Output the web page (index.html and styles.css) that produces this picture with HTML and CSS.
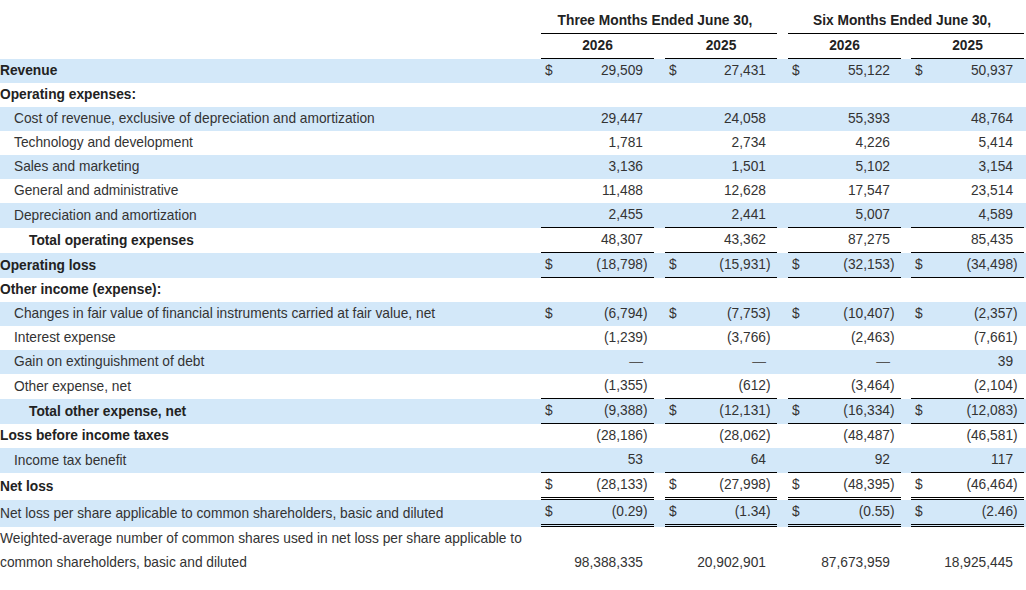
FILE: index.html
```html
<html>
  <head>
    <meta charset="utf-8">
    <link rel="stylesheet" href="styles.css">
  </head>
  <body>
    <table class="fin">
      <colgroup>
        <col class="w-label">
        <col class="w113"><col class="w11"><col class="w112"><col class="w11">
        <col class="w113"><col class="w10"><col class="w113"><col class="w2">
      </colgroup>
      <thead>
        <tr class="head1">
          <th></th>
          <th colspan="3" class="period b1">Three Months Ended June 30,</th>
          <th></th>
          <th colspan="3" class="period b1">Six Months Ended June 30,</th>
          <th></th>
        </tr>
        <tr class="head2">
          <th></th>
          <th class="year b1">2026</th><th></th>
          <th class="year b1">2025</th><th></th>
          <th class="year b1">2026</th><th></th>
          <th class="year b1">2025</th><th></th>
        </tr>
      </thead>
      <tbody>
        <tr class="band">
          <td class="label bold">Revenue</td>
          <td class="v"><span class="cur">$</span>29,509</td><td></td>
          <td class="v"><span class="cur">$</span>27,431</td><td></td>
          <td class="v"><span class="cur">$</span>55,122</td><td></td>
          <td class="v"><span class="cur">$</span>50,937</td><td></td>
        </tr>
        <tr>
          <td class="label bold">Operating expenses:</td>
          <td class="v"></td><td></td><td class="v"></td><td></td>
          <td class="v"></td><td></td><td class="v"></td><td></td>
        </tr>
        <tr class="band">
          <td class="label ind1">Cost of revenue, exclusive of depreciation and amortization</td>
          <td class="v">29,447</td><td></td>
          <td class="v">24,058</td><td></td>
          <td class="v">55,393</td><td></td>
          <td class="v">48,764</td><td></td>
        </tr>
        <tr>
          <td class="label ind1">Technology and development</td>
          <td class="v">1,781</td><td></td>
          <td class="v">2,734</td><td></td>
          <td class="v">4,226</td><td></td>
          <td class="v">5,414</td><td></td>
        </tr>
        <tr class="band">
          <td class="label ind1">Sales and marketing</td>
          <td class="v">3,136</td><td></td>
          <td class="v">1,501</td><td></td>
          <td class="v">5,102</td><td></td>
          <td class="v">3,154</td><td></td>
        </tr>
        <tr>
          <td class="label ind1">General and administrative</td>
          <td class="v">11,488</td><td></td>
          <td class="v">12,628</td><td></td>
          <td class="v">17,547</td><td></td>
          <td class="v">23,514</td><td></td>
        </tr>
        <tr class="band">
          <td class="label ind1">Depreciation and amortization</td>
          <td class="v b1">2,455</td><td></td>
          <td class="v b1">2,441</td><td></td>
          <td class="v b1">5,007</td><td></td>
          <td class="v b1">4,589</td><td></td>
        </tr>
        <tr>
          <td class="label ind2 bold">Total operating expenses</td>
          <td class="v b1">48,307</td><td></td>
          <td class="v b1">43,362</td><td></td>
          <td class="v b1">87,275</td><td></td>
          <td class="v b1">85,435</td><td></td>
        </tr>
        <tr class="band">
          <td class="label bold">Operating loss</td>
          <td class="v b1"><span class="cur">$</span>(18,798<span class="rp">)</span></td><td></td>
          <td class="v b1"><span class="cur">$</span>(15,931<span class="rp">)</span></td><td></td>
          <td class="v b1"><span class="cur">$</span>(32,153<span class="rp">)</span></td><td></td>
          <td class="v b1"><span class="cur">$</span>(34,498<span class="rp">)</span></td><td></td>
        </tr>
        <tr>
          <td class="label bold">Other income (expense):</td>
          <td class="v"></td><td></td><td class="v"></td><td></td>
          <td class="v"></td><td></td><td class="v"></td><td></td>
        </tr>
        <tr class="band">
          <td class="label ind1">Changes in fair value of financial instruments carried at fair value, net</td>
          <td class="v"><span class="cur">$</span>(6,794<span class="rp">)</span></td><td></td>
          <td class="v"><span class="cur">$</span>(7,753<span class="rp">)</span></td><td></td>
          <td class="v"><span class="cur">$</span>(10,407<span class="rp">)</span></td><td></td>
          <td class="v"><span class="cur">$</span>(2,357<span class="rp">)</span></td><td></td>
        </tr>
        <tr>
          <td class="label ind1">Interest expense</td>
          <td class="v">(1,239<span class="rp">)</span></td><td></td>
          <td class="v">(3,766<span class="rp">)</span></td><td></td>
          <td class="v">(2,463<span class="rp">)</span></td><td></td>
          <td class="v">(7,661<span class="rp">)</span></td><td></td>
        </tr>
        <tr class="band">
          <td class="label ind1">Gain on extinguishment of debt</td>
          <td class="v"><span class="dash">—</span></td><td></td>
          <td class="v"><span class="dash">—</span></td><td></td>
          <td class="v"><span class="dash">—</span></td><td></td>
          <td class="v">39</td><td></td>
        </tr>
        <tr>
          <td class="label ind1">Other expense, net</td>
          <td class="v b1">(1,355<span class="rp">)</span></td><td></td>
          <td class="v b1">(612<span class="rp">)</span></td><td></td>
          <td class="v b1">(3,464<span class="rp">)</span></td><td></td>
          <td class="v b1">(2,104<span class="rp">)</span></td><td></td>
        </tr>
        <tr class="band">
          <td class="label ind2 bold">Total other expense, net</td>
          <td class="v b1"><span class="cur">$</span>(9,388<span class="rp">)</span></td><td></td>
          <td class="v b1"><span class="cur">$</span>(12,131<span class="rp">)</span></td><td></td>
          <td class="v b1"><span class="cur">$</span>(16,334<span class="rp">)</span></td><td></td>
          <td class="v b1"><span class="cur">$</span>(12,083<span class="rp">)</span></td><td></td>
        </tr>
        <tr>
          <td class="label bold">Loss before income taxes</td>
          <td class="v">(28,186<span class="rp">)</span></td><td></td>
          <td class="v">(28,062<span class="rp">)</span></td><td></td>
          <td class="v">(48,487<span class="rp">)</span></td><td></td>
          <td class="v">(46,581<span class="rp">)</span></td><td></td>
        </tr>
        <tr class="band">
          <td class="label ind1">Income tax benefit</td>
          <td class="v b1">53</td><td></td>
          <td class="v b1">64</td><td></td>
          <td class="v b1">92</td><td></td>
          <td class="v b1">117</td><td></td>
        </tr>
        <tr>
          <td class="label bold">Net loss</td>
          <td class="v b3"><span class="cur">$</span>(28,133<span class="rp">)</span></td><td></td>
          <td class="v b3"><span class="cur">$</span>(27,998<span class="rp">)</span></td><td></td>
          <td class="v b3"><span class="cur">$</span>(48,395<span class="rp">)</span></td><td></td>
          <td class="v b3"><span class="cur">$</span>(46,464<span class="rp">)</span></td><td></td>
        </tr>
        <tr class="band">
          <td class="label">Net loss per share applicable to common shareholders, basic and diluted</td>
          <td class="v b3"><span class="cur">$</span>(0.29<span class="rp">)</span></td><td></td>
          <td class="v b3"><span class="cur">$</span>(1.34<span class="rp">)</span></td><td></td>
          <td class="v b3"><span class="cur">$</span>(0.55<span class="rp">)</span></td><td></td>
          <td class="v b3"><span class="cur">$</span>(2.46<span class="rp">)</span></td><td></td>
        </tr>
        <tr class="tall">
          <td class="label">Weighted-average number of common shares used in net loss per share applicable to<br>common shareholders, basic and diluted</td>
          <td class="v">98,388,335</td><td></td>
          <td class="v">20,902,901</td><td></td>
          <td class="v">87,673,959</td><td></td>
          <td class="v">18,925,445</td><td></td>
        </tr>
      </tbody>
    </table>
  </body>
</html>
```

FILE: styles.css
```css
* {
  padding: 0;
  margin: 0;
}
body {
  background-color: #fff;
}
.fin {
  width: 1026px;
  table-layout: fixed;
  border-collapse: separate;
  border-spacing: 0;
  color: #333;
  font-family: "Liberation Sans", Arial, Helvetica, sans-serif;
  font-size: 13.75px;
}
.w-label { width: 541px; }
.w113 { width: 113px; }
.w112 { width: 112px; }
.w11 { width: 11px; }
.w10 { width: 10px; }
.w2 { width: 2px; }

th, td {
  line-height: 24px;
  vertical-align: middle;
  white-space: nowrap;
}
th {
  font-weight: bold;
  color: #222;
}
.head1 th {
  padding-top: 9px;
}
.period {
  text-align: center;
  padding-right: 8px;
}
.year {
  text-align: center;
}
.band {
  background-color: #d3e8f9;
}
.label {
  text-align: left;
}
.bold {
  font-weight: bold;
  color: #222;
}
.ind1 {
  padding-left: 14px;
}
.ind2 {
  padding-left: 29px;
}
.v {
  text-align: right;
  padding: 0 11px 0 4px;
}
.cur {
  float: left;
}
.rp {
  margin-right: -4.6px;
}
.dash {
  color: #555;
}
.b1 {
  border-bottom: 1px solid #000;
}
.b3 {
  border-bottom: 3px double #000;
}
.tall .label {
  white-space: normal;
}
.tall .v {
  vertical-align: bottom;
}
```
